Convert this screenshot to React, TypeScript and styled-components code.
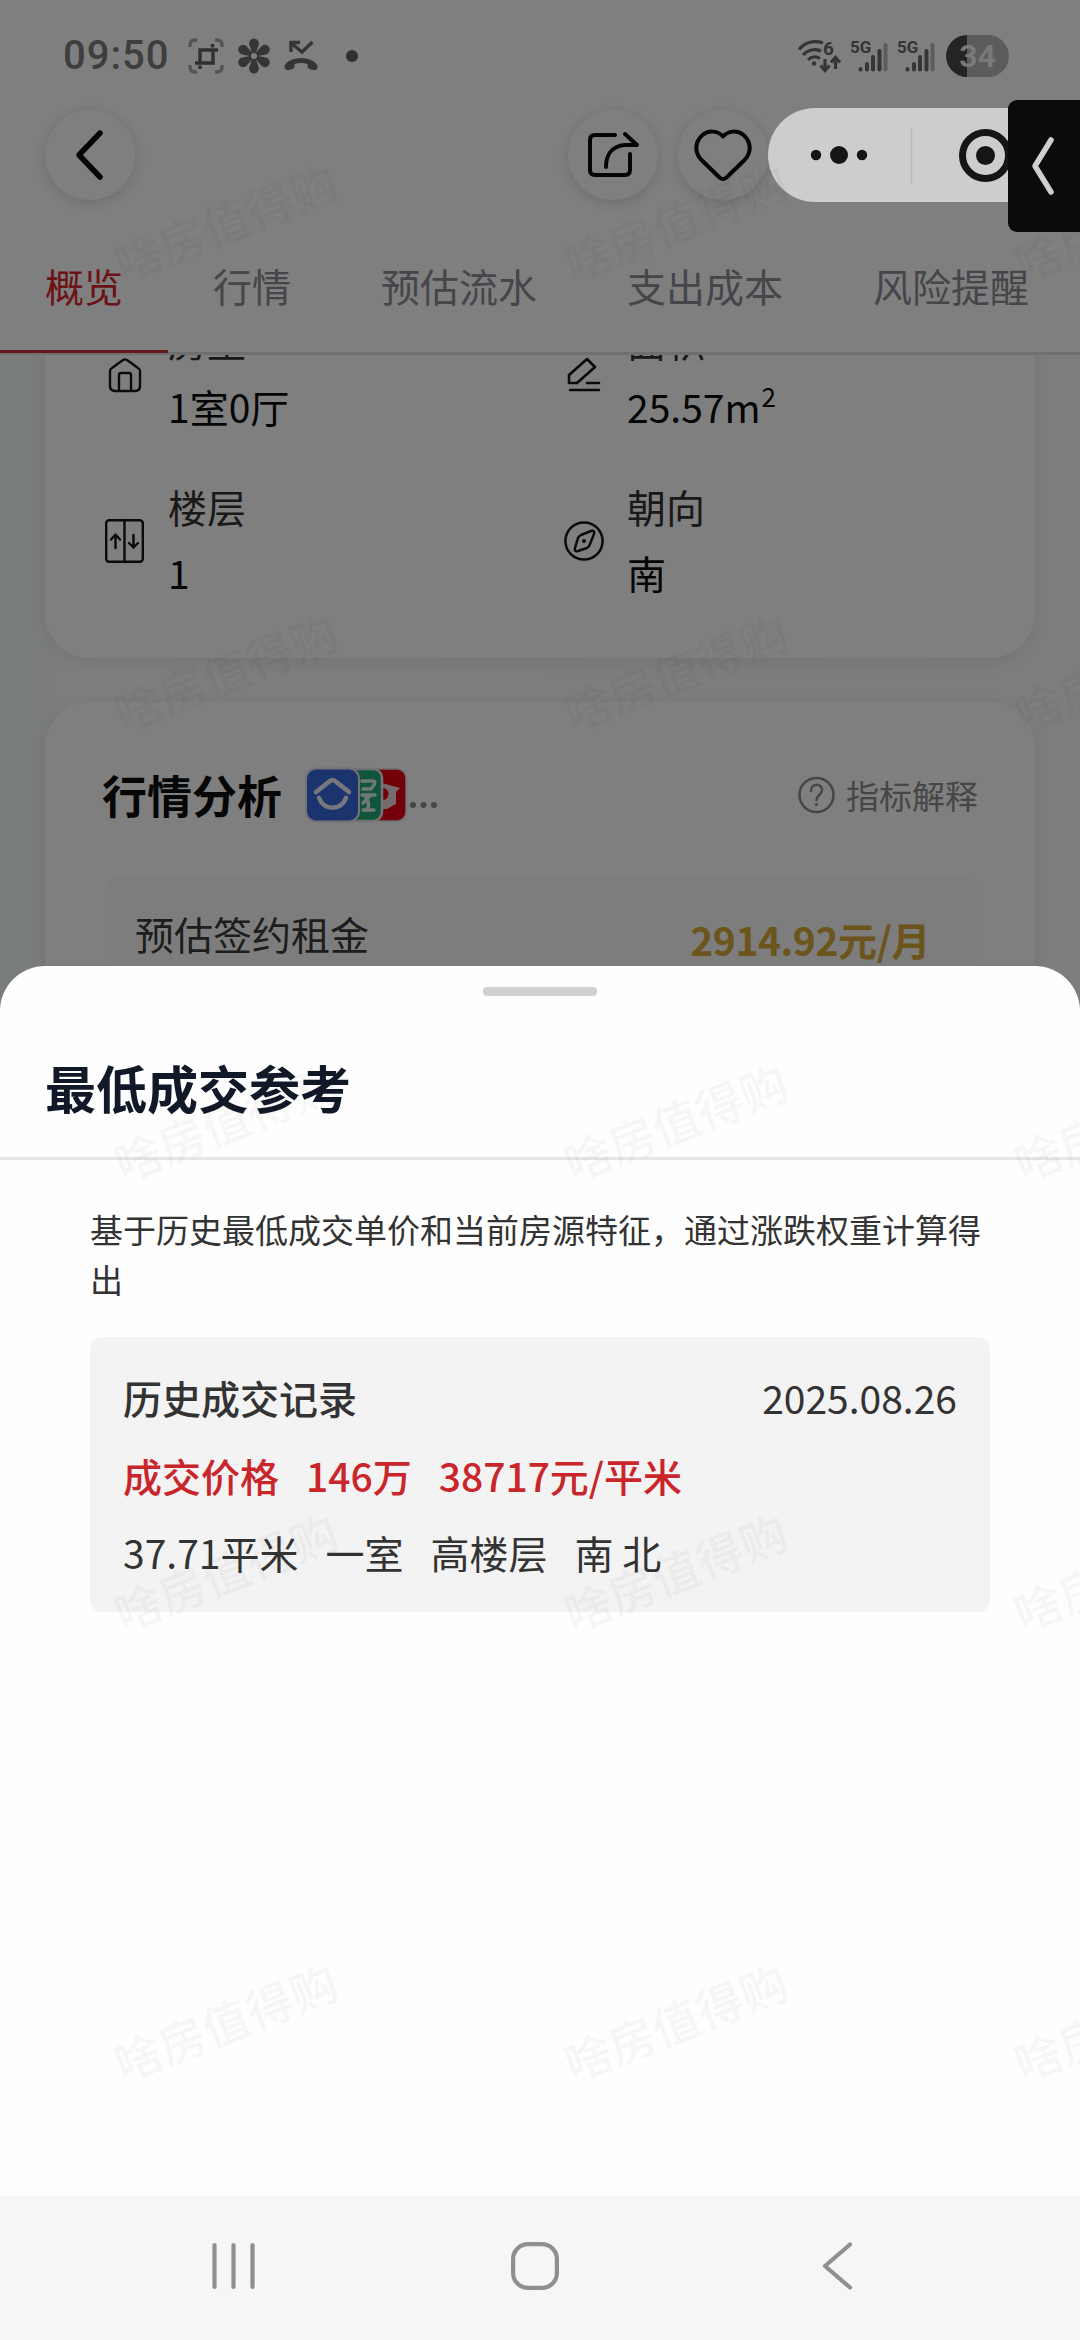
import React from "react";
import styled, { createGlobalStyle } from "styled-components";

const Global = createGlobalStyle`
  * { box-sizing: border-box; }
  html, body { margin: 0; padding: 0; }
  body {
    width: 1080px;
    font-family: "Noto Sans CJK SC", "Noto Sans", sans-serif;
    background: #fff;
  }
  svg { display: block; flex: none; overflow: visible; }
`;

const Screen = styled.div`
  position: relative;
  display: flex;
  flex-direction: column;
  width: 1080px;
  height: 2340px;
  overflow: hidden;
  background: #fff;
`;

const Page = styled.div`
  height: 1040px;
  overflow: hidden;
  background: #fbfcfb;
`;

const Header = styled.header`
  position: relative;
  z-index: 1;
  background: #fff;
`;

const StatusBar = styled.div`
  display: flex;
  align-items: center;
  justify-content: space-between;
  height: 108px;
  padding: 3px 71px 0 63px;
`;

const StatusSide = styled.div<{ $gap: number }>`
  display: flex;
  align-items: center;
  gap: ${(p) => p.$gap}px;
`;

const Clock = styled.span`
  width: 111px;
  font-family: Roboto, "Noto Sans", sans-serif;
  font-size: 40px;
  font-weight: 500;
  letter-spacing: 1px;
  line-height: 44px;
  color: #7c7c7c;
`;

const Battery = styled.span`
  display: flex;
  align-items: center;
  justify-content: center;
  width: 63px;
  height: 42px;
  margin-left: 2px;
  border-radius: 21px;
  background: linear-gradient(90deg, #484848 0 21px, #b8b8b8 21px);
  font-family: Roboto, "Noto Sans", sans-serif;
  font-size: 32px;
  font-weight: 600;
  line-height: 42px;
  color: #f4f4f4;
`;

const Toolbar = styled.div`
  display: flex;
  align-items: center;
  gap: 20px;
  height: 94px;
  padding: 0 312px 0 45px;
`;

const RoundButton = styled.button<{ $pushRight?: boolean }>`
  display: flex;
  align-items: center;
  justify-content: center;
  width: 90px;
  height: 90px;
  margin: 0 ${(p) => (p.$pushRight ? "auto" : "0")} 0 0;
  padding: 0;
  border: 0;
  border-radius: 50%;
  background: #fff;
  box-shadow: 0 3px 14px rgba(0, 0, 0, 0.15);
`;

const Tabs = styled.nav`
  display: flex;
  height: 153px;
  border-bottom: 3px solid #dedede;
`;

const Tab = styled.span<{ $active?: boolean }>`
  flex: none;
  height: 151px;
  padding: 53px 45px 0;
  border-bottom: 3px solid ${(p) => (p.$active ? "#c8323a" : "transparent")};
  font-size: 39px;
  line-height: 60px;
  color: ${(p) => (p.$active ? "#d9272e" : "#8b8d94")};
`;

const Content = styled.main`
  display: flex;
  flex-direction: column;
  gap: 44px;
  margin-top: -45px;
  padding: 0 45px;
  background: linear-gradient(90deg, #f1faf4 0, #f3faf5 30px, #fafcfa 70px, #fbfbfb 100%);
`;

const Card = styled.section`
  flex: none;
  padding: 0 57px 0 60px;
  border-radius: 45px;
  background: #fff;
  box-shadow: 0 4px 20px rgba(0, 0, 0, 0.09);
`;

const FactsCard = styled(Card)`
  display: grid;
  grid-template-columns: 459px 1fr;
  grid-auto-rows: 166px;
  height: 348px;
`;

const Fact = styled.div`
  display: flex;
  align-items: center;
  gap: 24px;
  height: 129px;
`;

const IconSlot = styled.span`
  display: flex;
  justify-content: center;
  width: 39px;
`;

const FactText = styled.div`
  display: flex;
  flex-direction: column;
  margin-top: -3px;
  font-size: 39px;
  line-height: 66px;
`;

const FactLabel = styled.span`
  color: #333;
`;

const FactValue = styled.span`
  color: #0b0b0b;

  sup {
    display: inline-block;
    margin-left: 1px;
    font-size: 26px;
    line-height: 1;
    vertical-align: 16px;
  }
`;

const MarketCard = styled(Card)`
  height: 420px;
`;

const MarketHead = styled.div`
  display: flex;
  align-items: center;
  height: 173px;
  padding-top: 12px;
`;

const MarketTitle = styled.h2`
  margin: 0 24px 0 -3px;
  font-size: 45px;
  font-weight: 700;
  line-height: 66px;
  color: #0d0d0d;
`;

const Explain = styled.span`
  display: flex;
  align-items: center;
  gap: 11px;
  margin-left: auto;
  font-size: 33px;
  line-height: 50px;
  color: #8c8c8c;
`;

const RentRow = styled.div`
  display: flex;
  justify-content: space-between;
  height: 200px;
  padding: 29px 48px 0 30px;
  border-radius: 18px;
  background: #fafafa;
  font-size: 39px;
  line-height: 58px;
  color: #3a3a3a;
`;

const Rent = styled.strong`
  padding-top: 6px;
  font-weight: 700;
  letter-spacing: -0.4px;
  color: #d8ab38;
`;

const Scrim = styled.div`
  position: absolute;
  inset: 0;
  z-index: 2;
  background: rgba(0, 0, 0, 0.5);
`;

const Capsule = styled.div`
  position: absolute;
  z-index: 3;
  top: 108px;
  left: 768px;
  width: 286px;
  height: 94px;
  border-radius: 47px;
  background: #cdcdcd;
`;

const EdgeHandle = styled.div`
  position: absolute;
  z-index: 4;
  top: 100px;
  right: 0;
  display: flex;
  align-items: center;
  width: 72px;
  height: 132px;
  padding-left: 24px;
  border-radius: 9px 0 0 9px;
  background: #0b0b0b;
`;

const Sheet = styled.section`
  position: relative;
  z-index: 3;
  flex: 1;
  margin-top: -74px;
  border-radius: 45px 45px 0 0;
  background: #fefefe;
`;

const Grip = styled.div`
  width: 114px;
  height: 9px;
  margin: 0 auto;
  border-radius: 4px;
  background: #d1d1d3;
`;

const SheetHead = styled.div`
  height: 194px;
  padding-top: 21px;
  border-bottom: 3px solid #e6e6e6;
`;

const SheetTitle = styled.h1`
  margin: 53px 45px 0;
  font-size: 51px;
  font-weight: 700;
  line-height: 76px;
  color: #111827;
`;

const SheetBody = styled.div`
  padding: 45px 90px 0;
`;

const Note = styled.p`
  margin: 0 0 33px;
  font-size: 33px;
  line-height: 49.5px;
  color: #333;
`;

const Deal = styled.div`
  display: flex;
  flex-direction: column;
  gap: 19px;
  height: 275px;
  padding: 31px 33px;
  border-radius: 12px;
  background: #f3f3f3;
  font-size: 39px;
  line-height: 58.5px;
  color: #333;
`;

const DealLine = styled.div<{ $spread?: boolean; $price?: boolean }>`
  display: flex;
  justify-content: ${(p) => (p.$spread ? "space-between" : "flex-start")};
  gap: 27px;
  font-weight: ${(p) => (p.$price ? 500 : 400)};
  color: ${(p) => (p.$price ? "#c9252b" : "#333")};
`;

const DealTitle = styled.span`
  font-weight: 500;
`;

const NavBar = styled.footer`
  position: relative;
  z-index: 3;
  display: flex;
  align-items: flex-start;
  gap: 256px;
  height: 144px;
  padding: 46px 0 0 212px;
  background: #f6f6f6;
`;

const Watermarks = styled.div`
  position: absolute;
  z-index: 3;
  top: -4px;
  left: 0;
  display: grid;
  grid-template-columns: repeat(3, 450px);
  grid-auto-rows: 450px;
  pointer-events: none;
`;

const Mark = styled.span`
  display: flex;
  align-items: center;
  justify-content: center;
  transform: rotate(-21.5deg);
  font-size: 47px;
  font-weight: 500;
  line-height: 60px;
  color: rgba(0, 0, 0, 0.055);
`;

const BackIcon = () => (
  <svg width="28" height="50" viewBox="0 0 28 50" fill="none" stroke="#0a0a0a" strokeWidth="5.500" strokeLinecap="round" strokeLinejoin="round">
    <path d="M24 3 3 25l21 22" />
  </svg>
);

const ShareIcon = () => (
  <svg width="52" height="46" viewBox="0 0 52 46" fill="none" stroke="#0a0a0a" strokeWidth="4" strokeLinecap="round" strokeLinejoin="round">
    <path d="M28 3H8q-5 0-5 5v30q0 5 5 5h30q5 0 5-5V22" />
    <path d="M38 2l12 11H38C24 14 19 24 19 35" />
  </svg>
);

const HeartIcon = () => (
  <svg width="58" height="52" viewBox="0 0 58 52" fill="none" stroke="#0a0a0a" strokeWidth="4" strokeLinejoin="round">
    <path d="M29 7.500C24 2 15 0.500 8.500 6 0.500 13 0.500 23 7 30.500L25.500 48.500q3.500 3 7 0L51 30.500C57.500 23 57.500 13 49.500 6 43 0.500 34 2 29 7.500Z" />
  </svg>
);

const CaptureIcon = () => (
  <svg width="36" height="36" viewBox="0 0 36 36" fill="none" strokeWidth="3.400">
    <path stroke="#a8a8a8" d="M2 9V7q0-5 5-5h2M27 2h2q5 0 5 5v2M34 27v2q0 5-5 5h-2M9 34H7q-5 0-5-5v-2" />
    <path stroke="#606060" d="M7 25h18V13M30 12H12v13M24.500 6v3.500M12 27.500V31" />
  </svg>
);

const FlowerIcon = () => (
  <svg width="32" height="36" viewBox="-16 -18 32 36" fill="#6a6a6a">
    {[0, 60, 120, 180, 240, 300].map((a) => (
      <path key={a} transform={`rotate(${a})`} d="M-2-3.500-5-12a5 5.500 0 1 1 10 0L2-3.500Z" />
    ))}
    <circle r="5" />
    <circle r="3" fill="#fff" />
  </svg>
);

const MissedCallIcon = () => (
  <svg width="34" height="32" viewBox="0 0 34 32" fill="none" stroke="#6a6a6a" strokeWidth="3.400">
    <path d="M7 12V2.500h9M7 3l11 9L28.500 2" />
    <path fill="#6a6a6a" stroke="none" d="M17 18c8 0 16 4 16.500 8.500 0 3-2 4-4 3.500l-4-1q-2-.5-2-3v-2q-6-2-13 0v2q0 2.500-2 3l-4 1c-2 .5-4-.5-4-3.500C1 22 9 18 17 18Z" />
  </svg>
);

const DotSlot = styled.span`
  margin-left: 14px;
`;

const DotIcon = () => (
  <svg width="12" height="12" viewBox="0 0 12 12" fill="#606060">
    <circle cx="6" cy="6" r="6" />
  </svg>
);

const WifiIcon = () => (
  <svg width="44" height="34" viewBox="0 0 44 34" fill="none" stroke="#6a6a6a" strokeWidth="3.200">
    <path d="M2 10.500C8 3 17 1 26 4M6 16c5-5.500 12-6.500 18-4M11 21c3-3.500 8-4 12-1.500" />
    <circle cx="17" cy="24.500" r="2.200" fill="#6a6a6a" stroke="none" />
    <text x="26" y="15.500" fill="#6a6a6a" stroke="none" fontFamily="Roboto" fontSize="19" fontWeight="700">6</text>
    <path d="M28 20v11M23.500 26.500l4.500 5 4.500-5M38.500 30V19M34 23.500l4.500-5 4.500 5" />
  </svg>
);

const SignalIcon = () => (
  <svg width="38" height="34" viewBox="0 0 38 34" fill="none" stroke="#6a6a6a" strokeWidth="4" strokeLinecap="round">
    <text x="0" y="14" fill="#6a6a6a" stroke="none" fontFamily="Roboto" fontSize="17" fontWeight="700">5G</text>
    <path d="M10.500 30v.5M17 25v5.500M23 18v12.500M29.500 12v18.500" />
    <path d="M35.500 6v24.500" stroke="#b8b8b8" />
  </svg>
);

const HomeIcon = () => (
  <svg width="34" height="36" viewBox="0 0 34 36" fill="none" stroke="#141414" strokeWidth="2.400" strokeLinejoin="round">
    <path d="M2 14q0-2 2-3L15 3q2-1.300 4 0l11 8q2 1 2 3v15q0 5-5 5H7q-5 0-5-5Z" />
    <path d="M11 34V18q0-2 2-2h8q2 0 2 2v16" />
  </svg>
);

const EditIcon = () => (
  <svg width="34" height="35" viewBox="0 0 34 35" fill="none" stroke="#141414" strokeWidth="2.600" strokeLinejoin="round" strokeLinecap="round">
    <path d="M20 2l8 8-18 16H2v-8Z" />
    <path d="M20 26h12M3 33h29" />
  </svg>
);

const ElevatorIcon = () => (
  <svg width="39" height="44" viewBox="0 0 39 44" fill="none" stroke="#141414" strokeWidth="2.400" strokeLinejoin="round" strokeLinecap="round">
    <rect x="1.200" y="1.200" width="36.600" height="41.600" rx="3" />
    <path d="M19.500 1v42M10.500 29V16M6 20.500l4.500-5 4.500 5M28.500 16v12.500M24 24l4.500 4.500L33 24" />
  </svg>
);

const CompassIcon = () => (
  <svg width="40" height="40" viewBox="0 0 40 40" fill="none" stroke="#141414" strokeWidth="2.500" strokeLinejoin="round">
    <circle cx="20" cy="20" r="18.600" />
    <path d="M17 14l10-4q4-1 3 3l-4 10q-1 3-3 4l-9 3q-4 1-3-3l3-10q1-2 3-3Z" />
    <circle cx="20" cy="20" r="2" fill="#141414" stroke="none" />
  </svg>
);

const SourceLogos = () => (
  <svg width="132" height="56" viewBox="0 0 132 56" fill="none" strokeLinecap="round" strokeLinejoin="round">
    <rect x="50" y="2" width="50" height="52" rx="9" fill="#e60012" stroke="#dcdce2" strokeWidth="1.500" />
    <path d="M76 16l18 5-4 4v12l-9 5h-6Z" fill="#ecd6d8" />
    <circle cx="76" cy="27" r="6.500" fill="#e60012" />
    <rect x="26" y="2" width="50" height="52" rx="9" fill="#20a878" stroke="#e6e6ee" strokeWidth="2.500" />
    <path d="M56 14h11q3 0 1 4l-3 4h-8M56 28h13M65 28l-8 8M59 29q6 7 2 14M57 43h11" stroke="#dff2ea" strokeWidth="3.400" />
    <rect x="0" y="1.500" width="53" height="53" rx="10" fill="#3868dc" stroke="#e6e6ee" strokeWidth="2" />
    <path d="M10 25l14-11q2.500-2 5 0l14 11M13 31c5 13 22 13 27 0" stroke="#eef1fb" strokeWidth="4.600" />
    <g fill="#8c8c8c">
      <circle cx="107" cy="38" r="3" />
      <circle cx="117.500" cy="38" r="3" />
      <circle cx="128" cy="38" r="3" />
    </g>
  </svg>
);

const HelpIcon = () => (
  <svg width="37" height="38" viewBox="0 0 37 38" fill="none" stroke="#8c8c8c" strokeWidth="2.500" strokeLinecap="round">
    <circle cx="18.500" cy="19" r="17" />
    <path d="M13 15c0-8 11-8 11-1 0 5-5.500 5-5.500 10" />
    <circle cx="18.500" cy="28.500" r="1.600" fill="#8c8c8c" stroke="none" />
  </svg>
);

const CapsuleIcons = () => (
  <svg width="286" height="94" viewBox="0 0 286 94" fill="#151515">
    <circle cx="48" cy="47" r="5.200" />
    <circle cx="71" cy="47" r="9" />
    <circle cx="94" cy="47" r="5.200" />
    <path d="M143.500 20v56" stroke="#b9b9b9" strokeWidth="1.500" />
    <circle cx="217.500" cy="47.500" r="23" fill="none" stroke="#151515" strokeWidth="7" />
    <circle cx="217.500" cy="47.500" r="9.500" />
  </svg>
);

const facts = [
  { icon: <HomeIcon />, label: "房型", value: "1室0厅" },
  { icon: <EditIcon />, label: "面积", value: <>25.57m<sup>2</sup></> },
  { icon: <ElevatorIcon />, label: "楼层", value: "1" },
  { icon: <CompassIcon />, label: "朝向", value: "南" },
];

const tabs = ["概览", "行情", "预估流水", "支出成本", "风险提醒"];

export default function App() {
  return (
    <Screen>
      <Global />
      <Page>
        <Header>
          <StatusBar>
            <StatusSide $gap={14}>
              <Clock>09:50</Clock>
              <CaptureIcon />
              <FlowerIcon />
              <MissedCallIcon />
              <DotSlot><DotIcon /></DotSlot>
            </StatusSide>
            <StatusSide $gap={9}>
              <WifiIcon />
              <SignalIcon />
              <SignalIcon />
              <Battery>34</Battery>
            </StatusSide>
          </StatusBar>
          <Toolbar>
            <RoundButton $pushRight><BackIcon /></RoundButton>
            <RoundButton><ShareIcon /></RoundButton>
            <RoundButton><HeartIcon /></RoundButton>
          </Toolbar>
          <Tabs>
            {tabs.map((name, i) => (
              <Tab key={name} $active={i === 0}>{name}</Tab>
            ))}
          </Tabs>
        </Header>
        <Content>
          <FactsCard>
            {facts.map((f) => (
              <Fact key={f.label}>
                <IconSlot>{f.icon}</IconSlot>
                <FactText>
                  <FactLabel>{f.label}</FactLabel>
                  <FactValue>{f.value}</FactValue>
                </FactText>
              </Fact>
            ))}
          </FactsCard>
          <MarketCard>
            <MarketHead>
              <MarketTitle>行情分析</MarketTitle>
              <SourceLogos />
              <Explain><HelpIcon />指标解释</Explain>
            </MarketHead>
            <RentRow>
              <span>预估签约租金</span>
              <Rent>2914.92元/月</Rent>
            </RentRow>
          </MarketCard>
        </Content>
      </Page>
      <Scrim />
      <Capsule><CapsuleIcons /></Capsule>
      <Sheet>
        <SheetHead>
          <Grip />
          <SheetTitle>最低成交参考</SheetTitle>
        </SheetHead>
        <SheetBody>
          <Note>基于历史最低成交单价和当前房源特征，通过涨跌权重计算得出</Note>
          <Deal>
            <DealLine $spread>
              <DealTitle>历史成交记录</DealTitle>
              <span>2025.08.26</span>
            </DealLine>
            <DealLine $price>
              <span>成交价格</span>
              <span>146万</span>
              <span>38717元/平米</span>
            </DealLine>
            <DealLine>
              <span>37.71平米</span>
              <span>一室</span>
              <span>高楼层</span>
              <span>南 北</span>
            </DealLine>
          </Deal>
        </SheetBody>
      </Sheet>
      <Watermarks>
        {Array.from({ length: 15 }, (_, i) => (
          <Mark key={i}>啥房值得购</Mark>
        ))}
      </Watermarks>
      <NavBar>
        <svg width="43" height="48" viewBox="0 0 43 48" stroke="#8f8f8f" strokeWidth="4.200" strokeLinecap="round">
          <path d="M2.500 3v42M21.500 3v42M40.500 3v42" />
        </svg>
        <svg width="48" height="48" viewBox="0 0 48 48" fill="none" stroke="#8f8f8f" strokeWidth="4.200">
          <rect x="2.100" y="2.100" width="43.800" height="43.800" rx="15" />
        </svg>
        <svg width="30" height="48" viewBox="-7 0 30 48" fill="none" stroke="#8f8f8f" strokeWidth="4.200" strokeLinecap="round" strokeLinejoin="round">
          <path d="M28 2.500 3 24l25 21.500" />
        </svg>
      </NavBar>
      <EdgeHandle>
        <svg width="22" height="58" viewBox="0 0 22 58" fill="none" stroke="#cfcfcf" strokeWidth="5.500" strokeLinecap="round" strokeLinejoin="round">
          <path d="M19 3 3 29l16 26" />
        </svg>
      </EdgeHandle>
    </Screen>
  );
}
